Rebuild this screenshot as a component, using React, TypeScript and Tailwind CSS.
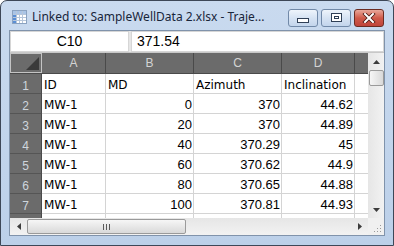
import React from "react";

const cols = [
    { key: "A", w: "w-[64px]" },
    { key: "B", w: "w-[88px]" },
    { key: "C", w: "w-[88px]" },
    { key: "D", w: "w-[73px]" },
];

const rows: (string | number)[][] = [
    ["ID", "MD", "Azimuth", "Inclination"],
    ["MW-1", 0, 370, 44.62],
    ["MW-1", 20, 370, 44.89],
    ["MW-1", 40, 370.29, 45],
    ["MW-1", 60, 370.62, 44.9],
    ["MW-1", 80, 370.65, 44.88],
    ["MW-1", 100, 370.81, 44.93],
];

const SheetIcon = () => (
    <svg width="15" height="14" viewBox="0 0 15 14">
        <rect x="0.5" y="0.5" width="14" height="13" fill="#ffffff" stroke="#8aa2c0" />
        <rect x="1" y="1" width="3" height="12" fill="#5a8fd6" />
        <rect x="1" y="1" width="13" height="3" fill="#a9c4e6" />
        {[4, 7, 10].map((y) => (
            <line key={"h" + y} x1="1" y1={y + 0.5} x2="14" y2={y + 0.5} stroke="#b6c6da" />
        ))}
        {[4, 7, 10].map((x) => (
            <line key={"v" + x} x1={x + 0.5} y1="1" x2={x + 0.5} y2="13" stroke="#b6c6da" />
        ))}
    </svg>
);

const TitleButton = ({ kind }: { kind: "min" | "max" | "close" }) => {
    if (kind === "close") {
        return (
            <div className="w-[30px] h-[18px] rounded-[3px] border border-[#6b2c22] bg-gradient-to-b from-[#e8a79a] via-[#cf5a4a] to-[#c0443a] flex items-center justify-center">
                <svg width="14" height="10" viewBox="0 0 14 10">
                    <path d="M3 1 L11 9 M11 1 L3 9" stroke="#4a1a14" strokeWidth="3.6" strokeLinecap="square" />
                    <path d="M3 1 L11 9 M11 1 L3 9" stroke="#ffffff" strokeWidth="2" strokeLinecap="square" />
                </svg>
            </div>
        );
    }
    return (
        <div className="w-[30px] h-[18px] rounded-[3px] border border-[#7189a8] bg-gradient-to-b from-[#eef4fb] via-[#d6e3f3] to-[#c3d5ec] flex items-center justify-center">
            {kind === "min" ? (
                <div className="w-[12px] h-[5px] mt-[6px] border border-[#2f3f56] bg-white" />
            ) : (
                <div className="w-[11px] h-[9px] border border-[#2f3f56] bg-white flex items-center justify-center">
                    <div className="w-[5px] h-[3px] border border-[#2f3f56]" />
                </div>
            )}
        </div>
    );
};

const Tri = ({ dir }: { dir: "up" | "down" | "left" | "right" }) => {
    const d = {
        up: "M0 4 L3.5 0 L7 4 Z",
        down: "M0 0 L3.5 4 L7 0 Z",
        left: "M4 0 L0 3.5 L4 7 Z",
        right: "M0 0 L4 3.5 L0 7 Z",
    }[dir];
    const vert = dir === "up" || dir === "down";
    return (
        <svg width={vert ? 7 : 4} height={vert ? 4 : 7} viewBox={vert ? "0 0 7 4" : "0 0 4 7"}>
            <path d={d} fill="#3c3c3c" />
        </svg>
    );
};

export default function App() {
    return (
        <div className="w-[394px] h-[246px] flex flex-col rounded-t-[7px] border border-[#3d4757] bg-gradient-to-b from-[#c9daef] to-[#bcd0e9] overflow-hidden">
            {/* title bar */}
            <div className="h-[29px] flex items-center pl-[11px] pr-[9px] shrink-0">
                <div className="mt-[2px]">
                    <SheetIcon />
                </div>
                <span className="ml-[5px] mt-[2px] text-[12px] text-[#18253a] whitespace-nowrap" style={{ fontFamily: '"Noto Sans", sans-serif' }}>
                    Linked to: SampleWellData 2.xlsx - Traje...
                </span>
                <div className="ml-auto flex gap-[3px] mt-[4px]">
                    <TitleButton kind="min" />
                    <TitleButton kind="max" />
                    <TitleButton kind="close" />
                </div>
            </div>

            {/* client area */}
            <div className="mx-[8px] border border-[#8093ab] flex flex-col h-[206px] shrink-0 bg-[#f0f0f0]" style={{ fontFamily: '"Liberation Sans", Arial, sans-serif' }}>
                {/* cell reference bar */}
                <div className="h-[22px] flex gap-[2px] border-b border-[#c8c8c8] bg-[#e6e6e6]">
                    <div className="w-[119px] bg-white border border-[#d6d6d6] flex items-center justify-center text-[14px] text-black">C10</div>
                    <div className="flex-1 bg-white border border-[#d6d6d6] flex items-center pl-[5px] text-[14px] text-black">371.54</div>
                </div>

                {/* grid */}
                <div className="h-[165px] flex overflow-hidden">
                    <div className="w-[358px] flex flex-col bg-white">
                        {/* column header */}
                        <div className="h-[21px] flex shrink-0 bg-[#6b6b6b] border-b border-[#4a4a4a]">
                            <div className="w-[32px] border border-[#c4c4c4] relative">
                                <div className="absolute right-[2px] bottom-[2px] w-0 h-0 border-l-[13px] border-l-transparent border-b-[13px] border-b-[#3a3a3a]" />
                            </div>
                            {cols.map((c) => (
                                <div key={c.key} className={`${c.w} border-r border-[#4a4a4a] flex items-center justify-center text-[12px] text-[#d4d4d4]`}>
                                    {c.key}
                                </div>
                            ))}
                            <div className="flex-1" />
                        </div>

                        {rows.map((r, i) => (
                            <div key={i} className="h-[20px] flex shrink-0">
                                <div className="w-[32px] bg-[#6b6b6b] border-b border-[#555555] border-r border-r-[#4a4a4a] flex justify-center pt-[3px] text-[12px] text-[#cfd6dd]">
                                    {i + 1}
                                </div>
                                {r.map((v, j) => (
                                    <div
                                        key={j}
                                        className={`${cols[j].w} border-r border-b border-[#d4d4d4] flex items-center pt-[2px] text-[13px] text-black whitespace-nowrap overflow-hidden ${typeof v === "number" ? "justify-end pr-[1px]" : "pl-[2px]"}`}
                                        style={typeof v === "string" ? { fontFamily: '"DejaVu Sans", sans-serif', fontSize: 12 } : undefined}
                                    >
                                        {v}
                                    </div>
                                ))}
                                <div className="flex-1 border-b border-[#d4d4d4]" />
                            </div>
                        ))}

                        {/* partial row 8 */}
                        <div className="h-[20px] flex shrink-0">
                            <div className="w-[32px] bg-[#6b6b6b] border-r border-[#4a4a4a]" />
                            {cols.map((c) => (
                                <div key={c.key} className={`${c.w} border-r border-[#d4d4d4]`} />
                            ))}
                        </div>
                    </div>

                    {/* vertical scrollbar */}
                    <div className="w-[16px] bg-gradient-to-r from-[#e6e6e6] to-[#f2f2f2] flex flex-col items-center">
                        <div className="h-[17px] flex items-center justify-center">
                            <Tri dir="up" />
                        </div>
                        <div className="w-[15px] h-[16px] rounded-[2px] border border-[#9a9a9a] bg-gradient-to-r from-[#f6f6f6] to-[#d9d9d9]" />
                        <div className="flex-1" />
                        <div className="h-[17px] flex items-center justify-center">
                            <Tri dir="down" />
                        </div>
                    </div>
                </div>

                {/* horizontal scrollbar */}
                <div className="h-[17px] flex bg-gradient-to-b from-[#e6e6e6] to-[#f2f2f2]">
                    <div className="w-[358px] flex items-center">
                        <div className="w-[17px] flex justify-center">
                            <Tri dir="left" />
                        </div>
                        <div className="w-[159px] h-[15px] rounded-[2px] border border-[#9a9a9a] bg-gradient-to-b from-[#f6f6f6] to-[#d9d9d9] flex items-center justify-center gap-[2px]">
                            <div className="w-px h-[6px] bg-[#5a5a5a]" />
                            <div className="w-px h-[6px] bg-[#5a5a5a]" />
                            <div className="w-px h-[6px] bg-[#5a5a5a]" />
                        </div>
                        <div className="flex-1" />
                        <div className="w-[17px] flex justify-center">
                            <Tri dir="right" />
                        </div>
                    </div>
                    <div className="w-[16px] bg-[#f0f0f0] relative">
                        <svg className="absolute right-[2px] bottom-[2px]" width="9" height="9" viewBox="0 0 9 9">
                            {[
                                [7, 1],
                                [4, 4],
                                [7, 4],
                                [1, 7],
                                [4, 7],
                                [7, 7],
                            ].map(([x, y], k) => (
                                <rect key={k} x={x} y={y} width="1" height="1" fill="#9a9a9a" />
                            ))}
                        </svg>
                    </div>
                </div>
            </div>
        </div>
    );
}
